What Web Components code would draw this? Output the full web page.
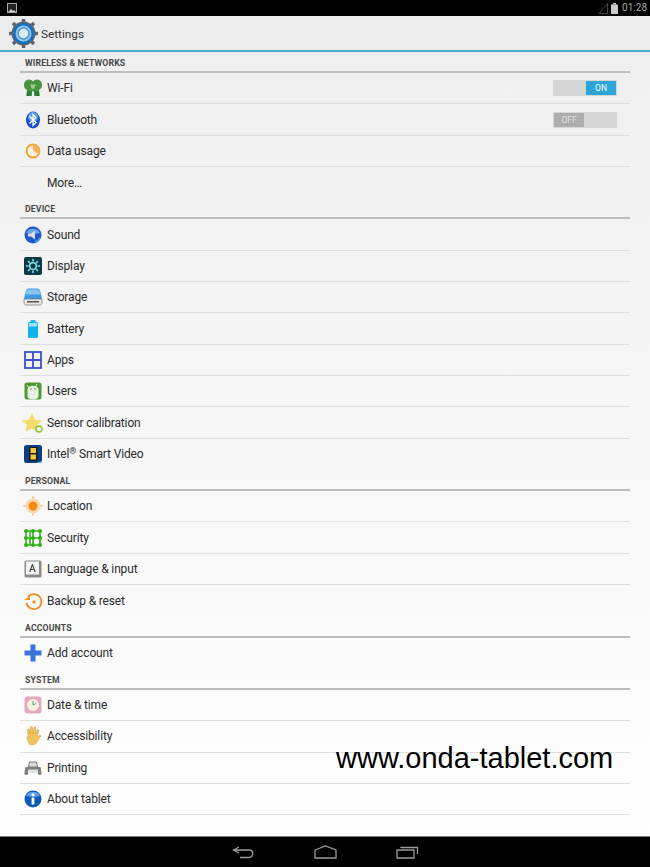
<!DOCTYPE html>
<html><head><meta charset="utf-8">
<style>
html,body{margin:0;padding:0;width:650px;height:867px;overflow:hidden;background:#fff}
body{font-family:Roboto,"Liberation Sans",sans-serif;position:relative;display:flex;flex-direction:column}
</style></head><body>
<x-status-bar></x-status-bar>
<x-action-bar title="Settings"></x-action-bar>
<x-list>
 <x-section label="WIRELESS &amp; NETWORKS"></x-section>
 <x-row icon="wifi" label="Wi-Fi"><x-toggle on></x-toggle></x-row>
 <x-row icon="bluetooth" label="Bluetooth"><x-toggle></x-toggle></x-row>
 <x-row icon="data" label="Data usage"></x-row>
 <x-row label="More…" last></x-row>
 <x-section label="DEVICE"></x-section>
 <x-row icon="sound" label="Sound"></x-row>
 <x-row icon="display" label="Display"></x-row>
 <x-row icon="storage" label="Storage"></x-row>
 <x-row icon="battery" label="Battery"></x-row>
 <x-row icon="apps" label="Apps"></x-row>
 <x-row icon="users" label="Users"></x-row>
 <x-row icon="sensor" label="Sensor calibration"></x-row>
 <x-row icon="intel" last><span>Intel<sup style="font-size:9px;line-height:0;vertical-align:4px">®</sup> Smart Video</span></x-row>
 <x-section label="PERSONAL"></x-section>
 <x-row icon="location" label="Location"></x-row>
 <x-row icon="security" label="Security"></x-row>
 <x-row icon="language" label="Language &amp; input"></x-row>
 <x-row icon="backup" label="Backup &amp; reset" last></x-row>
 <x-section label="ACCOUNTS"></x-section>
 <x-row icon="add" label="Add account" last></x-row>
 <x-section label="SYSTEM"></x-section>
 <x-row icon="date" label="Date &amp; time"></x-row>
 <x-row icon="access" label="Accessibility"></x-row>
 <x-row icon="print" label="Printing"></x-row>
 <x-row icon="about" label="About tablet"></x-row>
</x-list>
<x-watermark>www.onda-tablet.com</x-watermark>
<x-nav-bar></x-nav-bar>
<script>
const ICONS={
wifi:`<path d="M4 5.500c2.500-3 6.500-2.500 8 0 1.500-2.500 5.500-3 8 0 2 3 1 7-2 8.500l.5 6h-5l-.5-4.500h-2L10.500 20h-5l.5-6C3 12.500 2 8.500 4 5.500z" fill="#4b9440"/><path d="M9.500 8c1.500.7 3.500.7 5 0 0 3-1 5-2.500 5S9.500 11 9.500 8z" fill="#9ccb86"/><path d="M6 15h4.500v5h-5zM13.500 15H18l.5 5h-5z" fill="#2c7a34"/>`,
bluetooth:`<ellipse cx="12" cy="12" rx="7" ry="8.500" fill="#1d4fc4"/><ellipse cx="12" cy="9" rx="5" ry="5" fill="#5aa0ee"/><path d="M8.500 8.500 15 14.500 12 17.500V6.500l3 3-6.500 6" fill="none" stroke="#fff" stroke-width="1.300"/>`,
data:`<circle cx="12" cy="12" r="6.500" fill="#fdf3e2" stroke="#f59f26" stroke-width="1.800"/><path d="M12 5.500a6.500 6.500 0 0 1 5.700 9.500L12 12z" fill="#f8b35a"/>`,
sound:`<circle cx="12" cy="12" r="8.500" fill="#2258c9"/><path d="M5 10a8 8 0 0 1 14 0c-3 1-10 1-14 0z" fill="#6aa4ea"/><path d="M7 10.500h3l4-3v9l-4-3H7z" fill="#d9dbe8"/><path d="M14 19a8 8 0 0 0 5-4" stroke="#39b5ee" stroke-width="1.500" fill="none"/>`,
display:`<rect x="3" y="3" width="18" height="18" rx="2" fill="#073a45"/><circle cx="12" cy="12" r="3.300" fill="none" stroke="#7fe0f0" stroke-width="1.500"/><g stroke="#7fe0f0" stroke-width="1.600" stroke-linecap="round"><path d="M12 5.500v1.500M12 17v1.500M5.500 12H7M17 12h1.500M7.500 7.500l1 1M15.500 15.500l1 1M16.500 7.500l-1 1M8.500 15.500l-1 1"/></g>`,
storage:`<path d="M8 3.500h8c3 0 4 5 5 10.500H3C4 8.500 5 3.500 8 3.500z" fill="#3d9be6"/><path d="M8 4.500h8c1.500 0 3 2 3.500 5H4.500C5 6.500 6.500 4.500 8 4.500z" fill="#8ac6f2"/><path d="M3 14h18v4c0 1-1 2-2 2H5c-1 0-2-1-2-2z" fill="#e6e6e6" stroke="#777" stroke-width=".7"/><rect x="6" y="16" width="12" height="1.500" fill="#555"/>`,
battery:`<rect x="9.500" y="3" width="5" height="2.500" fill="#22b5e8"/><rect x="7" y="5" width="10" height="16" rx="1.500" fill="#13b4ee"/><rect x="8" y="6" width="8" height="3.500" fill="#9fe4f8"/>`,
apps:`<rect x="4" y="4" width="16" height="16" fill="#eef0fc" stroke="#3d50c8" stroke-width="1.800"/><path d="M12 4v16M4 12h16" stroke="#3d50c8" stroke-width="1.800"/>`,
users:`<rect x="3.500" y="3.500" width="17" height="17" rx="2.500" fill="#4d9a30"/><path d="M6.500 10c1-4.500 10-4.500 11 0v7c0 2-2.500 3.500-5.500 3.500s-5.500-1.500-5.500-3.500z" fill="#e9efe4"/><path d="M6 6l2 3M16 5l-1.500 3" stroke="#e9efe4" stroke-width="1"/><circle cx="10" cy="10" r=".8" fill="#4d9a30"/><circle cx="14" cy="10" r=".8" fill="#4d9a30"/>`,
sensor:`<path d="M11 2l3 6.500 7 1-5 5 1.500 6.500-6.500-3.500L4.500 20.500l1.500-6.500-5-4.500 7-1z" fill="#f2dd6c"/><circle cx="18" cy="18" r="3" fill="#f5fbe8" stroke="#8cc63f" stroke-width="1.600"/>`,
intel:`<rect x="3" y="3" width="18" height="18" rx="2.500" fill="#0a3f86"/><rect x="8" y="5" width="8.500" height="14" rx="1" fill="#1a1a1a"/><rect x="9.500" y="6" width="5.500" height="5" fill="#f3c93a"/><rect x="9.500" y="12.500" width="5.500" height="5" fill="#f3c93a"/><path d="M15 21h6v-2z" fill="#6fb9ea"/>`,
location:`<circle cx="12" cy="12" r="7.500" fill="#fbd9ae"/><circle cx="12" cy="12" r="4.500" fill="#f58a12"/><g stroke="#f8b25c" stroke-width="1.300"><path d="M12 2.500v2M12 19.500v2M2.500 12h2M19.500 12h2"/></g>`,
security:`<g stroke="#35b01f" stroke-width="1.600" fill="none"><path d="M5 5h14v14H5zM5 12h14M12 5v14M9 5v14"/></g><g fill="#29b311"><circle cx="5" cy="5" r="2"/><circle cx="12" cy="5" r="2"/><circle cx="19" cy="5" r="2"/><circle cx="5" cy="12" r="2"/><circle cx="12" cy="12" r="2"/><circle cx="19" cy="12" r="2"/><circle cx="5" cy="19" r="2"/><circle cx="12" cy="19" r="2"/><circle cx="19" cy="19" r="2"/></g>`,
language:`<rect x="3.500" y="3.500" width="17" height="17" rx="1.500" fill="#8a8a8a"/><rect x="5" y="4.500" width="13" height="13" fill="#f3f3f3"/><path d="M11.500 7l-3 8h1.300l.7-2h2.800l.7 2h1.300l-3-8zm-.6 5 1-3 1 3z" fill="#444" transform="translate(-.5)"/>`,
backup:`<path d="M7 8a7.500 7.500 0 1 1-1.500 6" fill="none" stroke="#f09023" stroke-width="1.800"/><path d="M3 10h6V6z" fill="#f09023" transform="translate(0 1)"/><circle cx="13" cy="13" r="1.700" fill="#f09023"/>`,
add:`<path d="M9.500 3.500h5v6h6v5h-6v6h-5v-6h-6v-5h6z" fill="#3a73d6"/>`,
date:`<rect x="3.500" y="3.500" width="17" height="17" rx="3" fill="#e8a8bc"/><circle cx="12" cy="12" r="6" fill="#f7f0e0"/><path d="M12 8v4l3-1.500" stroke="#5b9c9c" stroke-width="1" fill="none"/>`,
access:`<path d="M7 12l-.5-6a1 1 0 0 1 2 0l.5 4 .5-6.500a1 1 0 0 1 2 0l.3 6 1-5.500a1 1 0 0 1 2 0l-.3 6 1.500-4a1 1 0 0 1 1.800.6L16 13c1-1 3-2 4-1-1 1-3 4-4 6-1.500 2.500-5 3.500-7 2.500S6.500 16 6 14z" fill="#f0c35d" stroke="#c9953a" stroke-width=".5"/>`,
print:`<path d="M8.500 6h7l1 5h-9z" fill="#dcdcdc" stroke="#777" stroke-width="1"/><path d="M4.500 11h15l1 5.500h-17z" fill="#7d7d7d"/><rect x="7" y="13.500" width="10" height="3.500" fill="#e4e4e4"/><path d="M3.500 16.500h3.500v2H3.500zM17 16.500h3.500v2H17z" fill="#6a6a6a"/>`,
about:`<circle cx="12" cy="12" r="8.500" fill="#0f5cb8"/><path d="M5 9a8 8 0 0 1 14 0c-4 1-10 1-14 0z" fill="#5da2e8"/><circle cx="12" cy="7.800" r="1.500" fill="#fff"/><rect x="10.600" y="10.500" width="2.800" height="7" fill="#fff"/>`
};
const def=(name,html)=>customElements.define(name,class extends HTMLElement{
  constructor(){super();this.attachShadow({mode:'open'})}
  connectedCallback(){this.shadowRoot.innerHTML=typeof html==='function'?html(this):html}
});
def('x-status-bar',`<style>:host{display:flex;align-items:center;height:16px;background:#000;color:#a8a8a8;font-size:10px;padding:0 3px 0 7px;box-sizing:border-box;flex:none}
svg{display:block}.s{flex:1}.t{margin-left:4px;line-height:16px}</style>
<svg width="10" height="10" viewBox="0 0 10 10"><rect x=".5" y=".5" width="9" height="9" fill="#222" stroke="#aaa"/><path d="M1 9l3-3 2 2 1-1 2 2z" fill="#ccc"/></svg><div class="s"></div>
<svg width="10" height="12" viewBox="0 0 10 12" style="margin-right:3px"><path d="M1 11.500 9.500 1.500V11.500Z" fill="none" stroke="#4a4a4a"/></svg>
<svg width="7" height="11" viewBox="0 0 7 11"><rect x="2" y="0" width="3" height="1.500" fill="#ccc"/><rect x="0" y="1.500" width="7" height="9.500" fill="#ccc"/></svg>
<span class="t">01:28</span>`);
def('x-action-bar',e=>`<style>:host{display:flex;align-items:center;height:36px;flex:none;box-sizing:border-box;background:#ececec;border-bottom:2px solid #4aa9cf;padding:0 0 0 9px;color:#333;font-size:11.800px}
svg{display:block;margin-right:3px}span{padding-top:2px}</style>
<svg width="29" height="29" viewBox="0 0 29 29"><g fill="#5d6670"><circle cx="14.500" cy="14.500" r="12"/><g stroke="#5d6670" stroke-width="3.500"><path d="M14.500 0v29M0 14.500h29M4 4l21 21M25 4 4 25"/></g></g><circle cx="14.500" cy="14.500" r="10.500" fill="#1272c4"/><circle cx="14.500" cy="14.500" r="8" fill="#8ec8ee"/><circle cx="14.500" cy="14.500" r="5.500" fill="#dcecf5" stroke="#5a97c6" stroke-width="1.500"/></svg>
<span>${e.getAttribute('title')}</span>`);
def('x-list',`<style>:host{display:block;flex:1;min-height:0;padding:0 20px;background:linear-gradient(#efefef,#fdfdfd 93%,#fff)}</style><slot></slot>`);
def('x-section',e=>`<style>:host{display:flex;align-items:flex-end;box-sizing:border-box;height:21px;border-bottom:2px solid #bdbdbd;padding:0 0 3px 5px;font-size:8.700px;font-weight:700;color:#484848;line-height:10px;letter-spacing:.15px}</style>${e.getAttribute('label')}`);
def('x-row',e=>{const i=e.getAttribute('icon'),l=e.getAttribute('label');return `<style>:host{display:flex;align-items:center;box-sizing:border-box;height:31.350px;border-bottom:${e.hasAttribute('last')?'0':'1px solid #dedede'};font-size:12px;letter-spacing:-.15px;color:#2b2b2b;padding:0 13px 0 1px}
.i{width:24px;height:24px;flex:none;margin-right:2px;display:block;filter:blur(.3px)}.s{width:24px;height:24px;flex:none;margin-right:2px}.t{flex:1}</style>
${i?`<svg class="i" viewBox="0 0 24 24">${ICONS[i]}</svg>`:'<div class="s"></div>'}<div class="t">${l||'<slot></slot>'}</div>${l?'<slot></slot>':''}`});
def('x-toggle',e=>{const on=e.hasAttribute('on');return `<style>:host{display:flex;width:64px;height:16px;background:#d6d6d6;box-sizing:border-box;padding:1px;letter-spacing:0;justify-content:${on?'flex-end':'flex-start'}}
div{width:30px;display:flex;align-items:center;justify-content:center;font-size:8.500px;line-height:14px;background:${on?'#2ca5d8':'#adadad'};color:${on?'#fff':'#e2e2e2'}}</style><div>${on?'ON':'OFF'}</div>`});
def('x-watermark',`<style>:host{position:absolute;left:336px;top:741px;font:29px/34px "Liberation Sans",sans-serif;color:#000;white-space:nowrap}</style><slot></slot>`);
def('x-nav-bar',`<style>:host{display:flex;flex:none;height:31px;box-sizing:border-box;background:#000;border-top:1px solid #777;justify-content:center;align-items:center;gap:59px;padding:0 0 0 1px}
svg{display:block;fill:none;stroke:#9a9a9a;stroke-width:1.300}</style>
<svg width="23" height="14" viewBox="0 0 23 14"><path d="M7 2 1.500 5 7 8M2 5h15c5 0 5 7 0 7.500H8"/></svg>
<svg width="23" height="14" viewBox="0 0 23 14"><path d="M1 5 11.500 1 22 5v8H1z"/></svg>
<svg width="23" height="14" viewBox="0 0 23 14"><path d="M1 5h17v8H1zM5 3V2.500h16.500V9"/></svg>`);
</script>
</body></html>
